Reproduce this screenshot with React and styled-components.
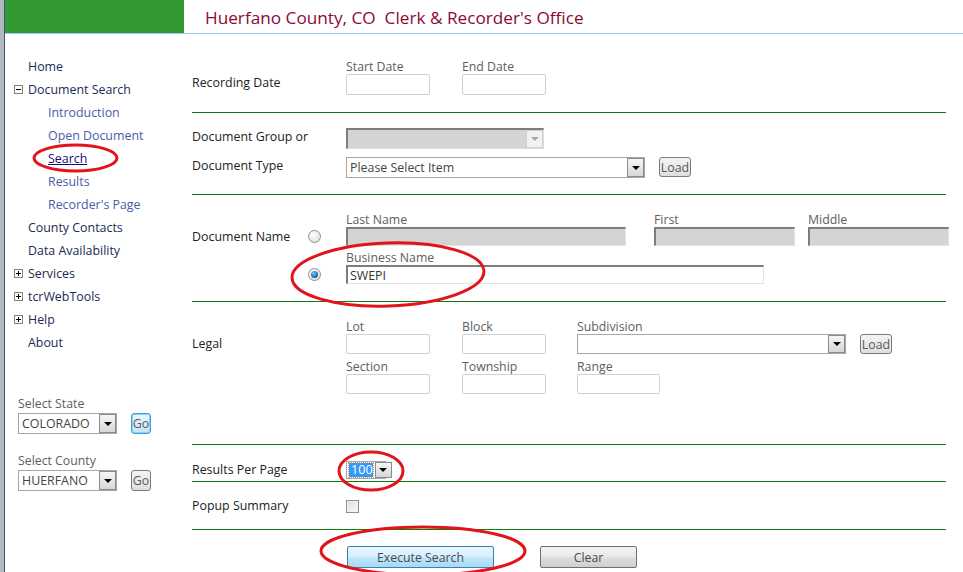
import React from "react";
import styled, { createGlobalStyle } from "styled-components";

const GlobalStyle = createGlobalStyle`
  html, body {
    margin: 0;
    padding: 0;
    background: #ffffff;
  }
  body {
    font-family: "Open Sans", "Noto Sans", "DejaVu Sans", sans-serif;
    font-size: 12.4px;
    color: #222222;
  }
`;

const Page = styled.div`
  position: relative;
  display: flex;
  width: 963px;
  height: 572px;
  overflow: hidden;
  background: #ffffff;
`;

const Rail = styled.div`
  width: 4px;
  flex-shrink: 0;
  background: #b3b7bf;
  border-right: 1px solid #44546a;
`;

const Frame = styled.div`
  flex: 1;
  display: flex;
  flex-direction: column;
`;

const Header = styled.header`
  display: flex;
  height: 33px;
  border-bottom: 1px solid #9fcbef;
`;

const Brand = styled.div`
  width: 179px;
  background: #339933;
`;

const Title = styled.h1`
  margin: 0;
  padding-left: 21px;
  font-size: 17.2px;
  font-weight: normal;
  line-height: 36px;
  color: #8a0a33;
  white-space: pre;
`;

const Body = styled.div`
  display: flex;
  flex: 1;
`;

const Sidebar = styled.aside`
  width: 187px;
  flex-shrink: 0;
  padding-top: 21px;
  display: flex;
  flex-direction: column;
`;

const Nav = styled.ul`
  list-style: none;
  margin: 0;
  padding: 0;
`;

const NavItem = styled.li`
  display: flex;
  align-items: center;
  height: 23px;
  padding-left: ${(p) => (p.$sub ? 43 : 9)}px;
  color: ${(p) => (p.$sub ? (p.$active ? "#10107a" : "#4b5cab") : "#1b2a55")};
  text-decoration: ${(p) => (p.$active ? "underline" : "none")};
`;

const ToggleSlot = styled.span`
  width: 14px;
  flex-shrink: 0;
  display: flex;
  align-items: center;
`;

const Picker = styled.div`
  padding-left: 13px;
  margin-top: ${(p) => p.$mt}px;
`;

const PickerRow = styled.div`
  display: flex;
  align-items: center;
  gap: 14px;
  margin-top: 2px;
`;

const Main = styled.main`
  width: 754px;
`;

const Section = styled.section`
  display: flex;
  align-items: ${(p) => p.$align || "flex-end"};
  padding-top: ${(p) => p.$pt}px;
  padding-bottom: ${(p) => p.$pb}px;
  border-bottom: ${(p) => (p.$noLine ? "none" : "1px solid #0a7d0a")};
`;

const RowLabel = styled.div`
  width: ${(p) => p.$w || 154}px;
  flex-shrink: 0;
  line-height: ${(p) => p.$lh || 20}px;
  color: #222222;
`;

const Stack = styled.div`
  display: flex;
  flex-direction: column;
  gap: ${(p) => p.$gap}px;
`;

const Line = styled.div`
  display: flex;
  align-items: ${(p) => p.$align || "center"};
  gap: ${(p) => p.$gap || 0}px;
`;

const Field = styled.div`
  display: flex;
  flex-direction: column;
`;

const Caption = styled.div`
  font-size: 12.3px;
  line-height: 15px;
  color: #5e5e5e;
`;

const TextInput = styled.input`
  box-sizing: border-box;
  width: ${(p) => p.$w}px;
  height: ${(p) => p.$h || 21}px;
  margin: 0;
  padding: 0 2px;
  font: inherit;
  color: #333333;
  background: #ffffff;
  border: 1px solid #cdd1d8;
  border-radius: 2px;
  outline: none;
`;

const InsetInput = styled.input`
  box-sizing: border-box;
  width: ${(p) => p.$w}px;
  height: 19px;
  margin: 0;
  padding: 0 2px;
  font: inherit;
  color: #333333;
  background: ${(p) => (p.disabled ? "#d4d4d4" : "#ffffff")};
  border-style: solid;
  border-width: 2px 1px 1px 2px;
  border-color: #7d7d7d #e4e4e4 #e4e4e4 #7d7d7d;
  outline: none;
`;

const SelectBox = styled.div`
  box-sizing: border-box;
  display: flex;
  align-items: center;
  width: ${(p) => p.$w}px;
  height: ${(p) => p.$h || 21}px;
  padding-left: 3px;
  background: ${(p) => (p.$disabled ? "#d4d4d4" : "#ffffff")};
  border: 1px solid #a6a6a6;
  ${(p) =>
    p.$disabled &&
    `border-width: 2px 1px 1px 2px;
     border-color: #7d7d7d #dcdcdc #dcdcdc #7d7d7d;`}
  color: #444444;
`;

const SelectText = styled.span`
  flex: 1;
  white-space: nowrap;
  overflow: hidden;
`;

const Arrow = styled.span`
  box-sizing: border-box;
  width: 17px;
  height: 100%;
  flex-shrink: 0;
  display: flex;
  align-items: center;
  justify-content: center;
  border: 1px solid ${(p) => (p.$disabled ? "#d0d0d0" : "#8a8a8a")};
  background: ${(p) =>
    p.$disabled ? "#f2f2f2" : "linear-gradient(#f6f6f6, #d6d6d6)"};
  &::after {
    content: "";
    border-left: 4px solid transparent;
    border-right: 4px solid transparent;
    border-top: 4px solid ${(p) => (p.$disabled ? "#a8a8a8" : "#000000")};
  }
`;

const Highlight = styled.span`
  flex: 1;
  margin: 1px 2px 1px 0;
  padding-left: 2px;
  line-height: 14px;
  font-size: 12.6px;
  color: #ffffff;
  background: #3399ff;
  outline: 1px dotted #e0a040;
`;

const SmallButton = styled.button`
  box-sizing: border-box;
  width: ${(p) => p.$w}px;
  height: ${(p) => p.$h || 20}px;
  margin: 0 0 0 ${(p) => p.$ml || 0}px;
  padding: 0;
  font: inherit;
  font-size: 12.4px;
  color: #5a5a5a;
  border: 1px solid ${(p) => (p.$focus ? "#3aa0dc" : "#7a7a7a")};
  border-radius: 3px;
  background: ${(p) =>
    p.$focus
      ? "linear-gradient(#eaf6fd, #c4e5f6)"
      : "linear-gradient(#f4f4f4, #dedede)"};
  box-shadow: ${(p) => (p.$focus ? "0 0 0 1px #8fd0f2 inset" : "none")};
`;

const BigButton = styled.button`
  box-sizing: border-box;
  width: ${(p) => p.$w}px;
  height: 22px;
  margin: 0 0 0 ${(p) => p.$ml || 0}px;
  padding: 0;
  font: inherit;
  font-size: 12.3px;
  color: #4a4a4a;
  border-radius: 2px;
  border: 1px solid ${(p) => (p.$primary ? "#3c7fb1" : "#707070")};
  background: ${(p) =>
    p.$primary
      ? "linear-gradient(#e8f5fd 0%, #d9f0fc 45%, #bee6fd 55%, #a7d9f5 100%)"
      : "linear-gradient(#f2f2f2 0%, #ebebeb 45%, #dddddd 55%, #cfcfcf 100%)"};
`;

const Radio = styled.span`
  box-sizing: border-box;
  width: 13px;
  height: 13px;
  border-radius: 50%;
  border: 1px solid #8e8f8f;
  background: radial-gradient(circle at 40% 35%, #ffffff, #d8d8d8);
  display: flex;
  align-items: center;
  justify-content: center;
  &::after {
    content: "";
    display: ${(p) => (p.$checked ? "block" : "none")};
    width: 7px;
    height: 7px;
    border-radius: 50%;
    background: radial-gradient(circle at 40% 35%, #7fd0f8, #0d5c96 70%, #0a3a66);
  }
`;

const RadioCol = styled.div`
  width: 38px;
  flex-shrink: 0;
  height: 19px;
  display: flex;
  align-items: center;
`;

const Checkbox = styled.span`
  box-sizing: border-box;
  width: 13px;
  height: 13px;
  border: 1px solid #8e8f8f;
  background: linear-gradient(135deg, #dcdcdc, #fbfbfb);
  box-shadow: inset 0 0 0 1px #f4f4f4;
`;

const Overlay = styled.svg`
  position: absolute;
  left: 0;
  top: 0;
  pointer-events: none;
`;

function Toggle({ open }) {
  return (
    <svg width="9" height="9" viewBox="0 0 9 9">
      <rect x="0.5" y="0.5" width="8" height="8" fill="#fff" stroke="#7f7f7f" />
      <path d="M2 4.5h5" stroke="#000" strokeWidth="1" />
      {!open && <path d="M4.5 2v5" stroke="#000" strokeWidth="1" />}
    </svg>
  );
}

const navItems = [
  { label: "Home" },
  { label: "Document Search", toggle: "open" },
  { label: "Introduction", sub: true },
  { label: "Open Document", sub: true },
  { label: "Search", sub: true, active: true },
  { label: "Results", sub: true },
  { label: "Recorder's Page", sub: true },
  { label: "County Contacts" },
  { label: "Data Availability" },
  { label: "Services", toggle: "closed" },
  { label: "tcrWebTools", toggle: "closed" },
  { label: "Help", toggle: "closed" },
  { label: "About" },
];

function Select({ w, h, text, disabled }) {
  return (
    <SelectBox $w={w} $h={h} $disabled={disabled}>
      <SelectText>{text}</SelectText>
      <Arrow $disabled={disabled} />
    </SelectBox>
  );
}

export default function App() {
  return (
    <>
      <GlobalStyle />
      <Page>
        <Rail />
        <Frame>
          <Header>
            <Brand />
            <Title>{"Huerfano County, CO  Clerk & Recorder's Office"}</Title>
          </Header>
          <Body>
            <Sidebar>
              <Nav>
                {navItems.map((item) => (
                  <NavItem key={item.label} $sub={item.sub} $active={item.active}>
                    {!item.sub && (
                      <ToggleSlot>
                        {item.toggle && <Toggle open={item.toggle === "open"} />}
                      </ToggleSlot>
                    )}
                    {item.label}
                  </NavItem>
                ))}
              </Nav>
              <Picker $mt={42}>
                <Caption>Select State</Caption>
                <PickerRow>
                  <Select w={99} text="COLORADO" />
                  <SmallButton $w={20} $h={21} $focus>
                    Go
                  </SmallButton>
                </PickerRow>
              </Picker>
              <Picker $mt={19}>
                <Caption>Select County</Caption>
                <PickerRow>
                  <Select w={99} text="HUERFANO" />
                  <SmallButton $w={20} $h={21}>
                    Go
                  </SmallButton>
                </PickerRow>
              </Picker>
            </Sidebar>

            <Main>
              <Section $pt={25} $pb={17}>
                <RowLabel $lh={24}>Recording Date</RowLabel>
                <Line $gap={32}>
                  <Field>
                    <Caption>Start Date</Caption>
                    <TextInput $w={84} />
                  </Field>
                  <Field>
                    <Caption>End Date</Caption>
                    <TextInput $w={84} />
                  </Field>
                </Line>
              </Section>

              <Section $pt={15} $pb={16}>
                <Stack $gap={8}>
                  <Line $align="flex-start">
                    <RowLabel $lh={18}>Document Group or</RowLabel>
                    <Select w={198} disabled />
                  </Line>
                  <Line $align="flex-start">
                    <RowLabel $lh={17}>Document Type</RowLabel>
                    <Select w={299} text="Please Select Item" />
                    <SmallButton $w={32} $ml={14}>
                      Load
                    </SmallButton>
                  </Line>
                </Stack>
              </Section>

              <Section $pt={17} $pb={17} $align="flex-start">
                <Stack $gap={4}>
                  <Line $align="flex-end">
                    <RowLabel $w={116} $lh={19}>
                      Document Name
                    </RowLabel>
                    <RadioCol>
                      <Radio />
                    </RadioCol>
                    <Line $gap={28} $align="flex-end">
                      <Field>
                        <Caption>Last Name</Caption>
                        <InsetInput $w={280} disabled />
                      </Field>
                      <Line $gap={13}>
                        <Field>
                          <Caption>First</Caption>
                          <InsetInput $w={141} disabled />
                        </Field>
                        <Field>
                          <Caption>Middle</Caption>
                          <InsetInput $w={141} disabled />
                        </Field>
                      </Line>
                    </Line>
                  </Line>
                  <Line $align="flex-end">
                    <RowLabel $w={116} />
                    <RadioCol>
                      <Radio $checked />
                    </RadioCol>
                    <Field>
                      <Caption>Business Name</Caption>
                      <InsetInput $w={418} defaultValue="SWEPI" />
                    </Field>
                  </Line>
                </Stack>
              </Section>

              <Section $pt={17} $pb={50} $align="flex-start">
                <Stack $gap={5}>
                  <Line $align="flex-end">
                    <RowLabel $lh={20}>Legal</RowLabel>
                    <Line $gap={32} $align="flex-end">
                      <Field>
                        <Caption>Lot</Caption>
                        <TextInput $w={84} $h={20} />
                      </Field>
                      <Field>
                        <Caption>Block</Caption>
                        <TextInput $w={84} $h={20} />
                      </Field>
                    </Line>
                    <Line $gap={31} $align="flex-end">
                      <span />
                      <Field>
                        <Caption>Subdivision</Caption>
                        <Select w={269} h={20} />
                      </Field>
                    </Line>
                    <SmallButton $w={32} $ml={14}>
                      Load
                    </SmallButton>
                  </Line>
                  <Line $align="flex-end">
                    <RowLabel />
                    <Line $gap={32} $align="flex-end">
                      <Field>
                        <Caption>Section</Caption>
                        <TextInput $w={84} $h={20} />
                      </Field>
                      <Field>
                        <Caption>Township</Caption>
                        <TextInput $w={84} $h={20} />
                      </Field>
                    </Line>
                    <Line $gap={31} $align="flex-end">
                      <span />
                      <Field>
                        <Caption>Range</Caption>
                        <TextInput $w={83} $h={20} />
                      </Field>
                    </Line>
                  </Line>
                </Stack>
              </Section>

              <Section $pt={16} $pb={2} $align="center">
                <RowLabel $lh={18}>Results Per Page</RowLabel>
                <SelectBox $w={40} $h={18} style={{ paddingLeft: 2 }}>
                  <Highlight>100</Highlight>
                  <Arrow />
                </SelectBox>
              </Section>

              <Section $pt={16} $pb={15} $align="center">
                <RowLabel $lh={16}>Popup Summary</RowLabel>
                <Checkbox />
              </Section>

              <Section $pt={16} $pb={0} $noLine $align="center">
                <RowLabel $w={155} />
                <BigButton $w={147} $primary>
                  Execute Search
                </BigButton>
                <BigButton $w={97} $ml={46}>
                  Clear
                </BigButton>
              </Section>
            </Main>
          </Body>
        </Frame>

        <Overlay width="963" height="572" viewBox="0 0 963 572">
          <g fill="none" stroke="#e3131b" strokeWidth="3">
            <ellipse cx="75.5" cy="158" rx="41.5" ry="13" />
            <ellipse cx="388" cy="274.5" rx="96" ry="31.5" transform="rotate(-2 388 274.5)" />
            <ellipse cx="371" cy="471" rx="32" ry="19" />
            <ellipse cx="423" cy="551" rx="102" ry="24" />
          </g>
        </Overlay>
      </Page>
    </>
  );
}
